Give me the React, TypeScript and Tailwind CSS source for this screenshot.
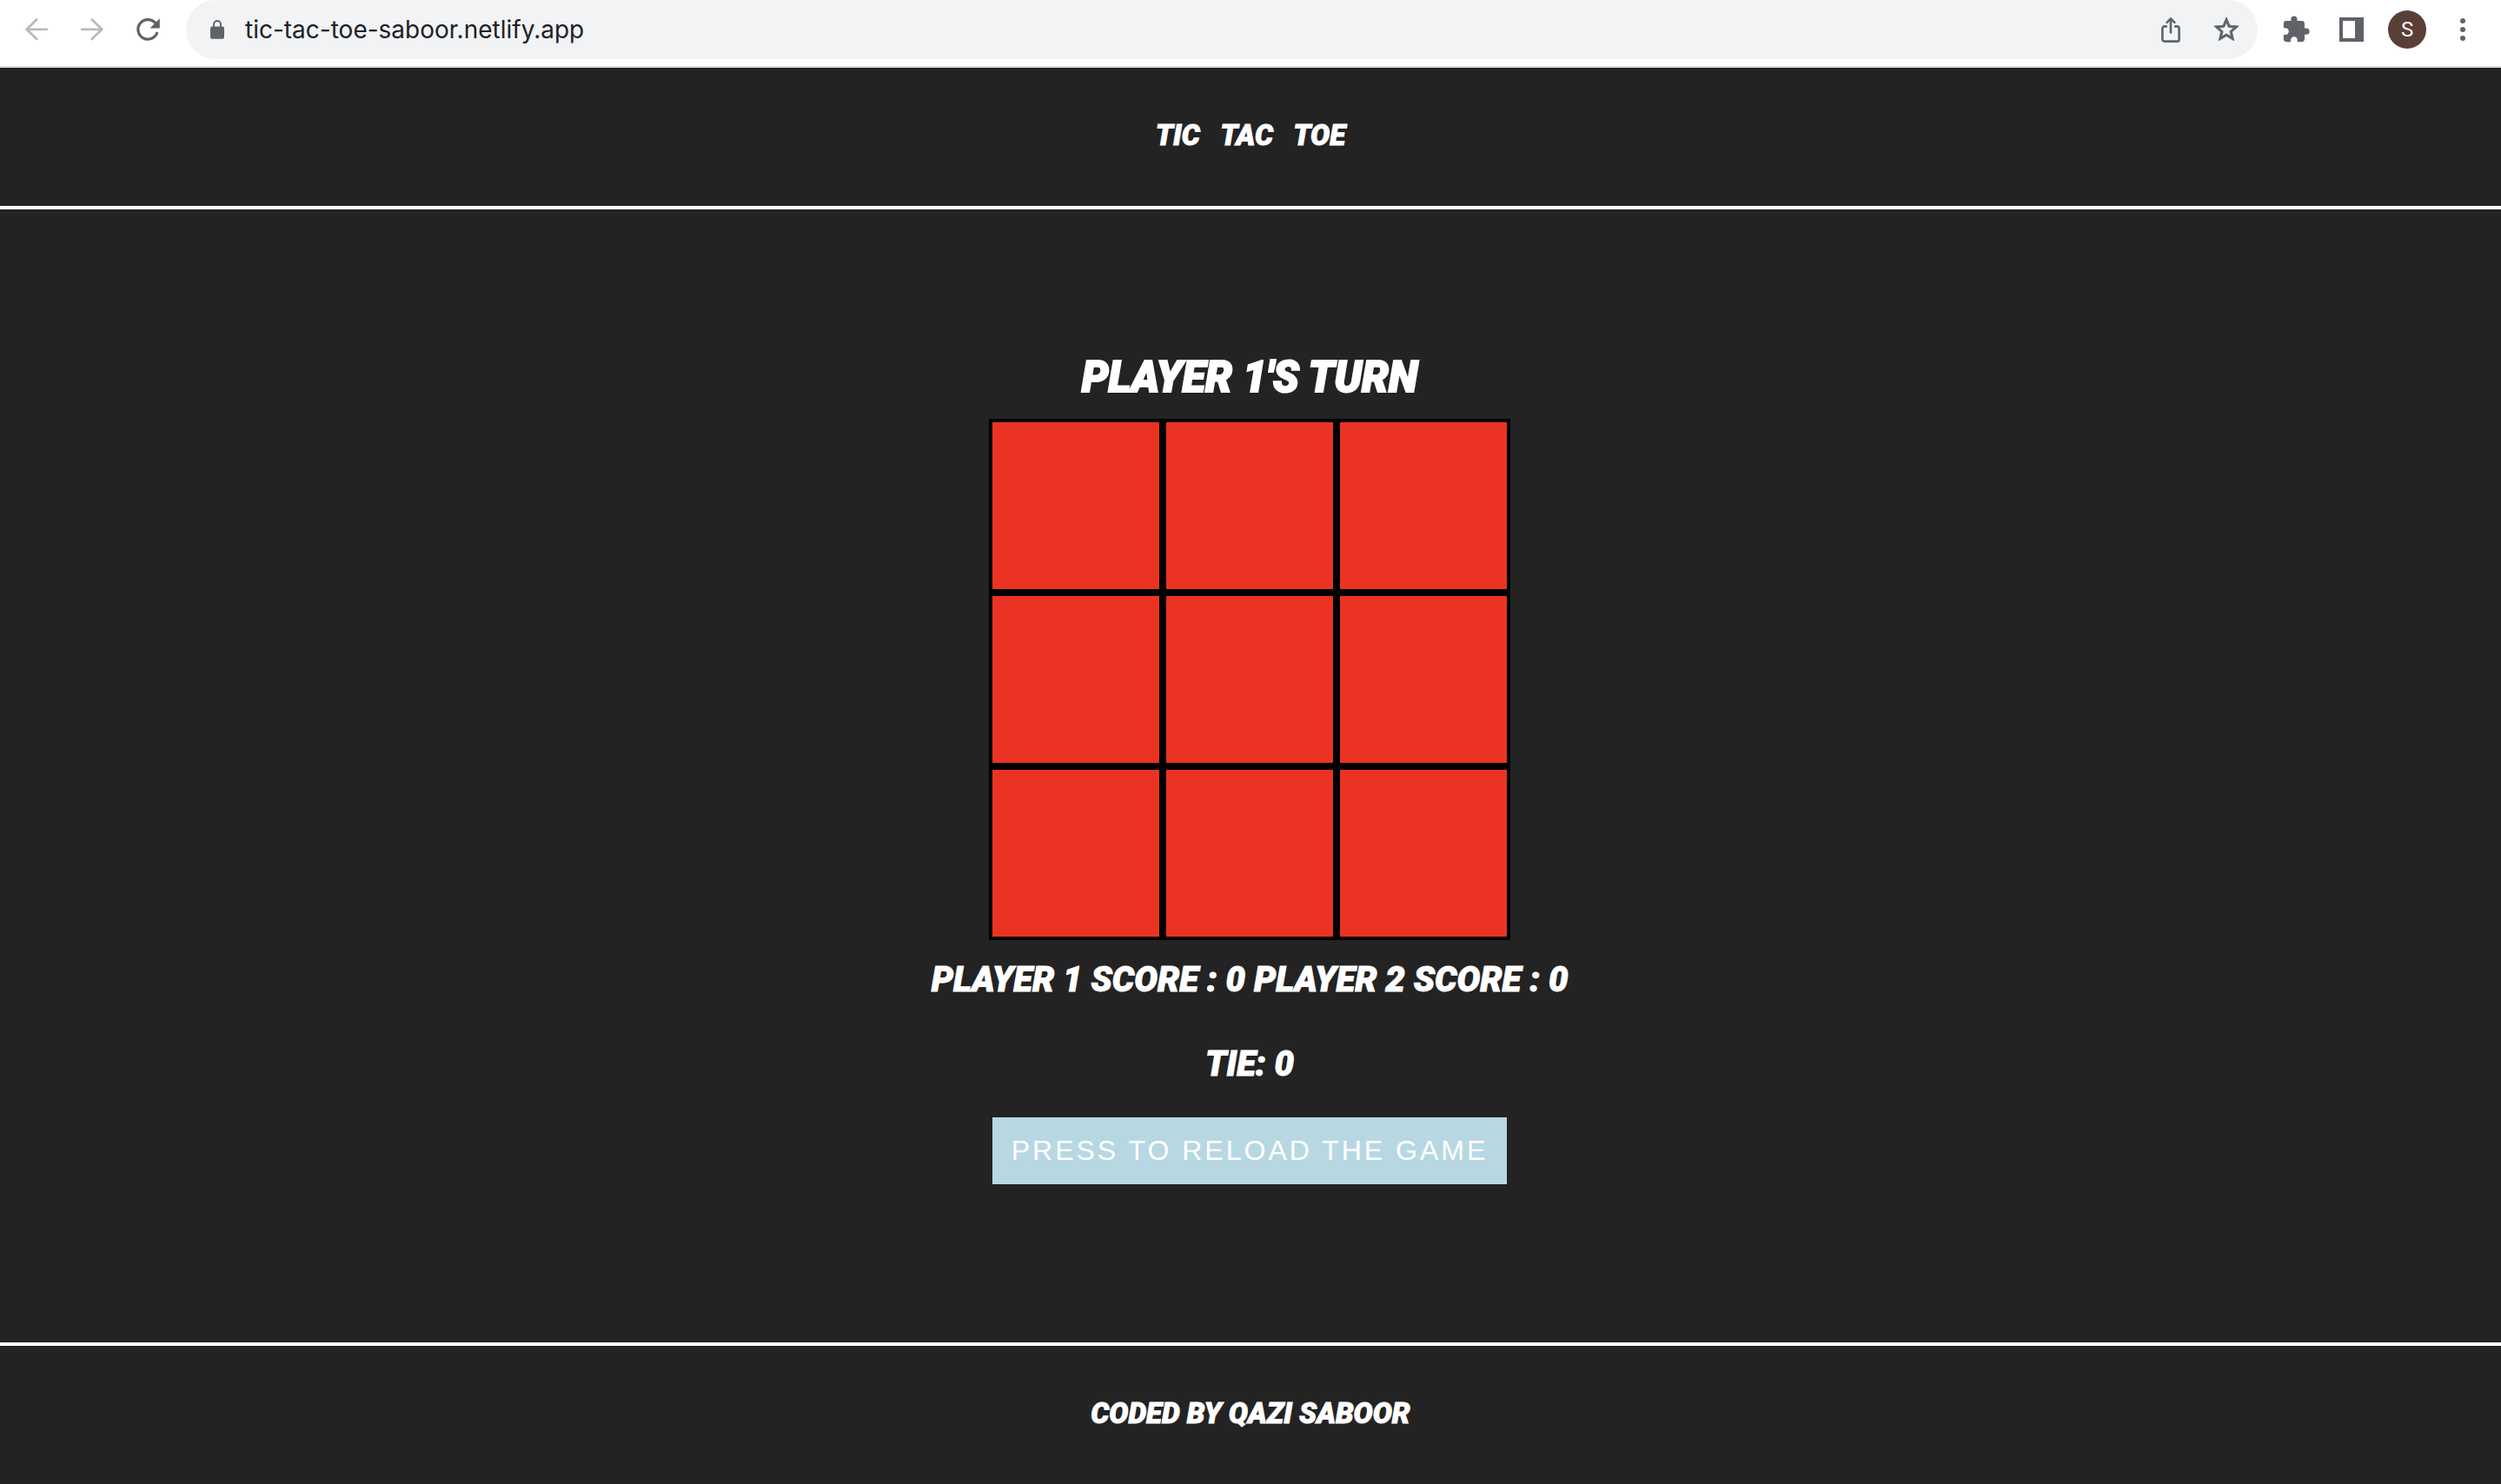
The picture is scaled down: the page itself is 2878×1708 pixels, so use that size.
import { useState } from "react";
import type { ReactNode } from "react";
import { MdExtension } from "react-icons/md";

function BackIcon() {
  return (
    <svg className="h-8 w-8" viewBox="0 0 32 32" fill="none" stroke="currentColor" strokeWidth="2.8" strokeLinecap="round" strokeLinejoin="round" aria-hidden="true">
      <path d="M16.3 4.6 4.6 15.8l11.7 11.2M4.6 15.8H27.8" />
    </svg>
  );
}

function ForwardIcon() {
  return (
    <svg className="h-8 w-8" viewBox="0 0 32 32" fill="none" stroke="currentColor" strokeWidth="2.8" strokeLinecap="round" strokeLinejoin="round" aria-hidden="true">
      <path d="M15.7 4.6 27.4 15.8 15.7 27M27.4 15.8H4.2" />
    </svg>
  );
}

function ReloadIcon() {
  return (
    <svg className="h-8 w-8" viewBox="0 0 32 32" fill="none" aria-hidden="true">
      <path d="M24.5 8.2A11.3 11.3 0 1 0 26.6 20.2" stroke="currentColor" strokeWidth="3.2" strokeLinecap="round" />
      <path d="M29.8 3.2V14.4H18.6Z" fill="currentColor" />
    </svg>
  );
}

function LockIcon() {
  return (
    <svg className="h-[22px] w-4 shrink-0 text-[#5f6368]" viewBox="0 0 16 22" fill="none" aria-hidden="true">
      <rect x="0" y="7.5" width="16" height="14.2" rx="2" fill="currentColor" />
      <path d="M4 9V5a4 4 0 0 1 8 0v4" stroke="currentColor" strokeWidth="1.9" />
    </svg>
  );
}

function ShareIcon() {
  return (
    <svg className="h-8 w-8" viewBox="0 0 32 32" fill="none" stroke="currentColor" strokeWidth="2.6" strokeLinecap="round" aria-hidden="true">
      <path d="M10.8 12.4H8.6a2.2 2.2 0 0 0-2.2 2.2v12.8a2.2 2.2 0 0 0 2.2 2.2h14.8a2.2 2.2 0 0 0 2.2-2.2V14.6a2.2 2.2 0 0 0-2.2-2.2h-2.2" />
      <path d="M16 19.5V4M11.6 7.8 16 3.4l4.4 4.4" strokeLinejoin="round" />
    </svg>
  );
}

function StarIcon() {
  return (
    <svg className="h-[34px] w-[34px]" viewBox="0 0 24 24" fill="currentColor" stroke="currentColor" strokeWidth="0.6" aria-hidden="true">
      <path d="M22 9.24l-7.19-.62L12 2 9.19 8.63 2 9.24l5.46 4.73L5.82 21 12 17.27 18.18 21l-1.63-7.03L22 9.24zM12 15.4l-3.76 2.27 1-4.28-3.32-2.88 4.38-.38L12 6.1l1.71 4.04 4.38.38-3.32 2.88 1 4.28L12 15.4z" />
    </svg>
  );
}

function SidePanelIcon() {
  return (
    <svg className="h-7 w-7" viewBox="0 0 28 28" aria-hidden="true">
      <path fill="currentColor" fillRule="evenodd" d="M0 0h28v28H0zM4 4v20h14V4z" />
    </svg>
  );
}

function MenuIcon() {
  return (
    <svg className="h-8 w-8" viewBox="0 0 32 32" fill="currentColor" aria-hidden="true">
      <circle cx="16" cy="6" r="3" />
      <circle cx="16" cy="16" r="3" />
      <circle cx="16" cy="26" r="3" />
    </svg>
  );
}

function ToolButton({ label, disabled, children }: { label: string; disabled?: boolean; children: ReactNode }) {
  return (
    <button
      type="button"
      aria-label={label}
      disabled={disabled}
      className="flex h-[68px] w-16 shrink-0 items-center justify-center text-[#5f6368] disabled:text-[#bababc]"
    >
      {children}
    </button>
  );
}

function BrowserBar() {
  return (
    <nav aria-label="Browser toolbar" className="flex gap-3 border-b-2 border-[#dadada] bg-white pr-3 pb-2 pl-[10px]">
      <div className="flex">
        <ToolButton label="Back" disabled><BackIcon /></ToolButton>
        <ToolButton label="Forward" disabled><ForwardIcon /></ToolButton>
        <ToolButton label="Reload page"><ReloadIcon /></ToolButton>
      </div>
      <div className="flex min-w-0 flex-1 items-center rounded-full bg-[#f1f3f4] pr-1 pl-7">
        <LockIcon />
        <input
          type="text"
          aria-label="Address"
          defaultValue="tic-tac-toe-saboor.netlify.app"
          className="min-w-0 flex-1 bg-transparent pl-6 font-['Inter',sans-serif] text-[28px] leading-9 text-[#202124] outline-none"
        />
        <ToolButton label="Share this page"><ShareIcon /></ToolButton>
        <ToolButton label="Bookmark this page"><StarIcon /></ToolButton>
      </div>
      <div className="flex">
        <ToolButton label="Extensions"><MdExtension className="h-[34px] w-[34px]" /></ToolButton>
        <ToolButton label="Side panel"><SidePanelIcon /></ToolButton>
        <ToolButton label="Profile">
          <span className="flex h-11 w-11 items-center justify-center rounded-full bg-[#5a3f37] font-['Roboto',sans-serif] text-2xl text-white">
            S
          </span>
        </ToolButton>
        <ToolButton label="Menu"><MenuIcon /></ToolButton>
      </div>
    </nav>
  );
}

const LINES = [
  [0, 1, 2], [3, 4, 5], [6, 7, 8],
  [0, 3, 6], [1, 4, 7], [2, 5, 8],
  [0, 4, 8], [2, 4, 6],
];

export default function App() {
  const [cells, setCells] = useState<string[]>(Array(9).fill(""));
  const [player, setPlayer] = useState(1);
  const [scores, setScores] = useState({ one: 0, two: 0, tie: 0 });

  const reload = () => {
    setCells(Array(9).fill(""));
    setPlayer(1);
  };

  const play = (index: number) => {
    if (cells[index]) return;
    const next = cells.slice();
    next[index] = player === 1 ? "X" : "O";
    const won = LINES.some((line) => line.every((i) => next[i] !== "" && next[i] === next[index]));
    if (won || next.every(Boolean)) {
      const key = !won ? "tie" : player === 1 ? "one" : "two";
      setScores({ ...scores, [key]: scores[key] + 1 });
      reload();
      return;
    }
    setCells(next);
    setPlayer(player === 1 ? 2 : 1);
  };

  return (
    <div className="flex min-h-screen flex-col bg-[#232323] font-['Roboto',sans-serif] text-white">
      <BrowserBar />
      <header className="border-b-4 border-white pt-[58px] pb-[61px] text-center">
        <h1 className="text-[33px] leading-10 font-black whitespace-pre italic [-webkit-text-stroke:1px_white]">TIC   TAC   TOE</h1>
      </header>
      <main className="flex flex-1 flex-col items-center pt-[165px] pr-[2px] font-black">
        <h2 className="text-[49px] leading-[58px] italic [-webkit-text-stroke:2px_white]">PLAYER {player}'S TURN</h2>
        <div className="mt-[18px] grid grid-cols-3">
          {cells.map((mark, index) => (
            <button
              key={index}
              type="button"
              aria-label={`Cell ${index + 1}`}
              onClick={() => play(index)}
              className="flex h-[200px] w-[200px] items-center justify-center border-4 border-black bg-[#ea3323] text-8xl text-white"
            >
              {mark}
            </button>
          ))}
        </div>
        <p className="mt-[23px] text-[40px] leading-[46px] italic [-webkit-text-stroke:1px_white]">
          <span>PLAYER 1 SCORE : {scores.one}</span> <span>PLAYER 2 SCORE : {scores.two}</span>
        </p>
        <p className="mt-[51px] text-[40px] leading-[46px] italic [-webkit-text-stroke:1px_white]">TIE: {scores.tie}</p>
        <button
          type="button"
          onClick={reload}
          className="mt-[38px] bg-[#b7d8e3] px-[22px] py-5 font-['Liberation_Sans',Arial,sans-serif] text-[32px] leading-[37px] font-normal tracking-[3px]"
        >
          PRESS TO RELOAD THE GAME
        </button>
      </main>
      <footer className="border-t-4 border-white pt-[58px] pb-[61px] text-center">
        <p className="text-[33px] leading-10 font-black italic [-webkit-text-stroke:1px_white]">CODED BY QAZI SABOOR</p>
      </footer>
    </div>
  );
}
